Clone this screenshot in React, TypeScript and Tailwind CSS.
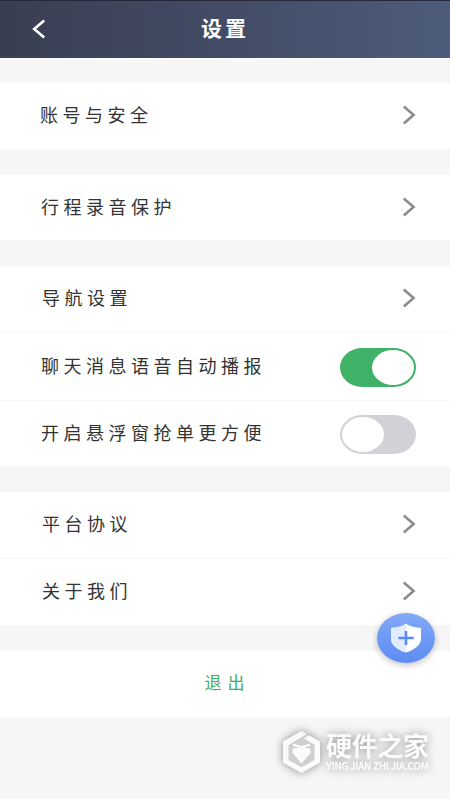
'use client'

import { useState } from 'react';

function Arrow() {
  return (
    <svg width="14" height="22" viewBox="0 0 14 22" fill="none" className="mr-[34px] mb-[2px] shrink-0">
      <path d="M1.8 2.4L11.6 11L1.8 19.6" stroke="#8c8c90" strokeWidth="2.6" />
    </svg>
  );
}

function Toggle({ on, onClick }) {
  return (
    <button
      onClick={onClick}
      className={`mt-px mr-[34px] flex h-[39px] w-[76px] items-center rounded-[23px/20px] px-[2px] ${on ? 'justify-end bg-[#3fb168]' : 'justify-start bg-[#d1d2d8]'}`}
    >
      <span className="h-[35px] w-[42px] rounded-[50%] bg-white" />
    </button>
  );
}

function Row({ label, className = '', children }) {
  return (
    <div className={`flex items-center justify-between bg-white ${className}`}>
      <span className="mb-1 text-[18px] leading-6 tracking-[4.5px] text-[#333]">{label}</span>
      {children}
    </div>
  );
}

function Shield() {
  return (
    <svg width="32" height="30" viewBox="0 0 32 30">
      <path d="M16 .8C20 3.4 25 4.8 31 5V16C31 22 24 27 16 29.4C8 27 1 22 1 16V5C7 4.8 12 3.4 16 .8Z" fill="#fff" />
      <path d="M16 .8V29.4C8 27 1 22 1 16V5C7 4.8 12 3.4 16 .8Z" fill="#e2ecfe" />
      <path d="M16 8V22M8.3 15H23.7" stroke="#5b8af0" strokeWidth="2.6" />
    </svg>
  );
}

function Watermark() {
  return (
    <div className="absolute top-[730px] left-[282px] flex items-start text-[#fbfbfb] drop-shadow-[0_0_5px_rgba(0,0,0,0.42)]">
      <svg width="39" height="44" viewBox="0 0 39 44">
        <path d="M19.5 1L38 11.5V32.5L19.5 43L1 32.5V11.5Z" fill="#cfcfcf" />
        <path
          d="M19.5 1L24.8 4L6.5 15V30L19.5 37.2L32.5 30V14.5L22 8.5L27 5.3L38 11.5V32.5L19.5 43L1 32.5V11.5Z"
          fill="#fbfbfb"
        />
        <path d="M11 13.5L19.5 16L28 13.5V16L22 17.2L28.5 18.8V23L19.5 33.5L10.5 23V18.8L17 17.2L11 16Z" fill="#fbfbfb" />
      </svg>
      <div className="ml-[5px] whitespace-nowrap">
        <div className="mt-[2px] h-[27px] text-[26px] leading-[26px] font-bold tracking-[-0.3px]">硬件之家</div>
        <div className="mt-px text-[10px] leading-[12px] font-bold tracking-[-0.42px]">YING JIAN ZHI JIA.COM</div>
      </div>
    </div>
  );
}

export default function Settings() {
  const [broadcast, setBroadcast] = useState(true);
  const [floating, setFloating] = useState(false);

  return (
    <div className="relative flex h-[800px] w-[450px] flex-col overflow-hidden bg-[#f6f6f6] font-['Noto_Sans_CJK_SC',sans-serif]">
      <header className="grid h-[58px] grid-cols-[1fr_auto_1fr] items-center border-t border-[#26283c] bg-linear-to-r from-[#393e52] via-[#434c66] to-[#4d5c7b] text-white">
        <svg width="14" height="20" viewBox="0 0 14 20" fill="none" className="mb-px ml-8">
          <path d="M12.2 1.5L2.2 10L12.2 18.5" stroke="#fff" strokeWidth="2.6" />
        </svg>
        <h1 className="-mt-[5px] text-[21px] leading-7 font-bold tracking-[3px]">设置</h1>
      </header>
      <div className="h-px bg-white" />

      <div className="mt-6 bg-white pl-10">
        <Row label="账号与安全" className="h-[66px]"><Arrow /></Row>
      </div>

      <div className="mt-[26px] bg-white pl-[41px]">
        <Row label="行程录音保护" className="h-[65px]"><Arrow /></Row>
      </div>

      <div className="mt-[26px] bg-white">
        <Row label="导航设置" className="h-[66px] pl-[42px]"><Arrow /></Row>
        <Row label="聊天消息语音自动播报" className="h-[68px] border-t border-[#f7f7f7] pl-[41px]">
          <Toggle on={broadcast} onClick={() => setBroadcast(!broadcast)} />
        </Row>
        <Row label="开启悬浮窗抢单更方便" className="h-[66px] border-t border-[#f7f7f7] pl-[41px]">
          <Toggle on={floating} onClick={() => setFloating(!floating)} />
        </Row>
      </div>

      <div className="mt-[26px] bg-white">
        <Row label="平台协议" className="h-[66px] pl-[42px]"><Arrow /></Row>
        <Row label="关于我们" className="h-[67px] border-t border-[#f7f7f7] pl-[42px]"><Arrow /></Row>
      </div>

      <button className="mt-[26px] h-[66px] bg-white pb-[5px] pl-[5px] text-[17px] tracking-[6px] text-[#3fae68]">退出</button>

      <div className="absolute top-[613px] left-[377px] flex h-[50px] w-[58px] items-center justify-center rounded-[50%] bg-linear-to-b from-[#83a9f7] to-[#5c8bf2] shadow-[0_2px_6px_rgba(0,0,0,0.25)]">
        <Shield />
      </div>
      <Watermark />
      <div className="mt-auto h-px bg-white" />
    </div>
  );
}
